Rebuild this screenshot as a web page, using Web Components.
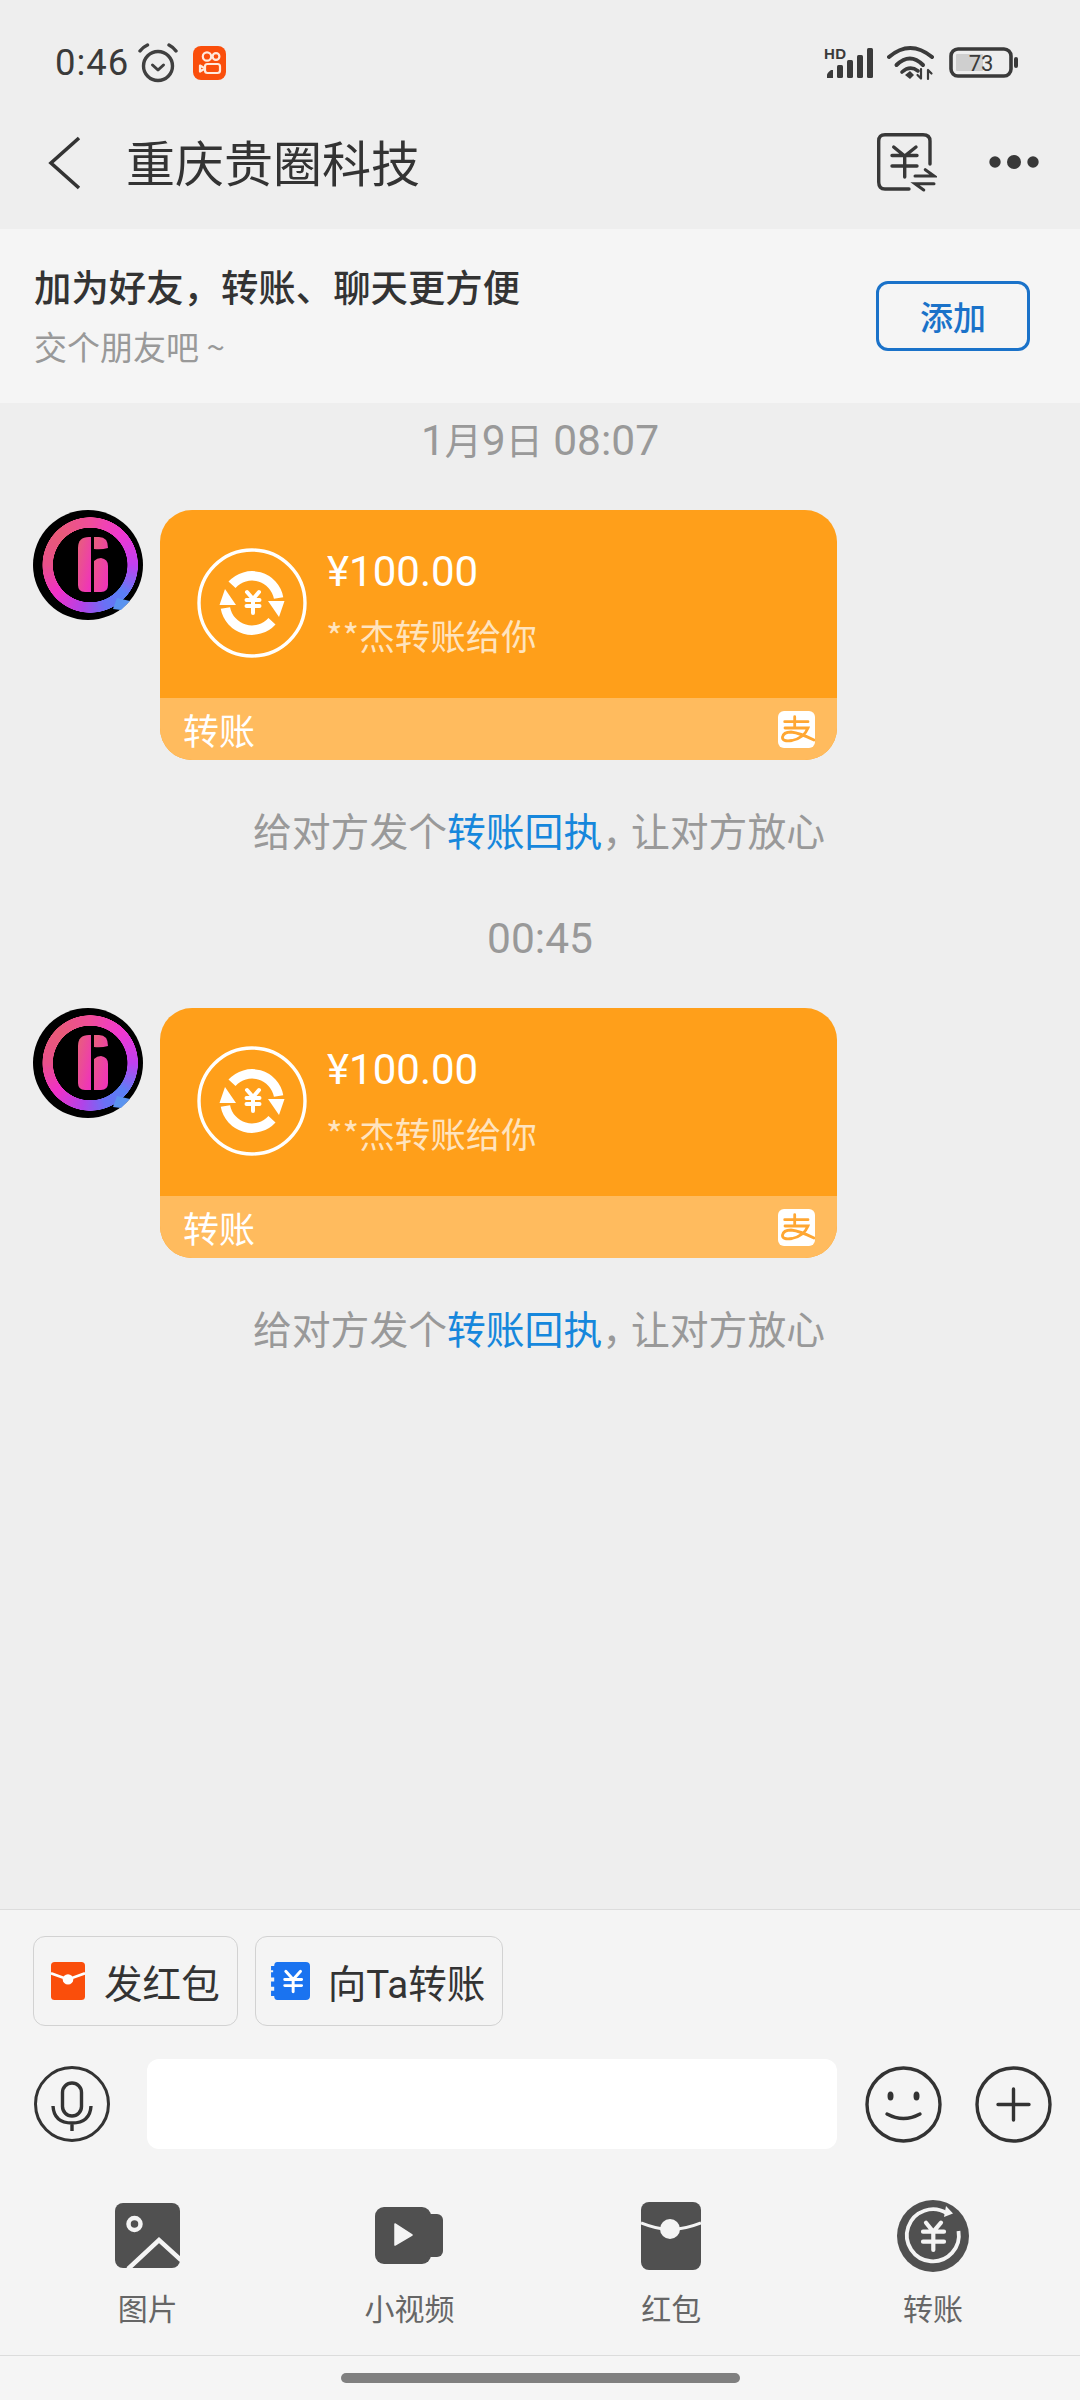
<!DOCTYPE html>
<html lang="zh">
<head>
<meta charset="utf-8">
<title>重庆贵圈科技</title>
<style>
  html, body { margin: 0; padding: 0; }
  body {
    width: 1080px;
    height: 2400px;
    overflow: hidden;
    background: #eeeeee;
    font-family: "Noto Sans CJK SC", "Noto Sans", sans-serif;
  }
  chat-page { height: 2400px; }
</style>
</head>
<body>
<chat-page>
  <status-bar slot="top"></status-bar>
  <chat-header slot="top" title="重庆贵圈科技"></chat-header>
  <friend-banner slot="top"></friend-banner>

  <time-stamp style="margin-top:14px">1<small>月</small>9<small>日</small> 08:07</time-stamp>
  <transfer-message style="margin-top:43px" amount="¥100.00" sender="**杰转账给你"></transfer-message>
  <receipt-note style="margin-top:42px"></receipt-note>
  <time-stamp style="margin-top:59px">00:45</time-stamp>
  <transfer-message style="margin-top:45px" amount="¥100.00" sender="**杰转账给你"></transfer-message>
  <receipt-note style="margin-top:42px"></receipt-note>

  <chat-toolbar slot="bottom"></chat-toolbar>
  <home-bar slot="bottom"></home-bar>
</chat-page>

<script>
class ChatPage extends HTMLElement {
  constructor() {
    super();
    this.attachShadow({mode: 'open'}).innerHTML = `
      <style>
        :host { display: flex; flex-direction: column; }
        main { flex: 1; min-height: 0; display: flex; flex-direction: column; }
      </style>
      <slot name="top"></slot>
      <main><slot></slot></main>
      <slot name="bottom"></slot>
    `;
  }
}

class StatusBar extends HTMLElement {
  constructor() {
    super();
    this.attachShadow({mode: 'open'}).innerHTML = `
      <style>
        :host {
          display: flex;
          align-items: center;
          height: 96px;
          padding: 30px 62px 0 55px;
          box-sizing: border-box;
          color: #3a3a3a;
        }
        .time { font: 400 36.500px/1 Roboto, sans-serif; letter-spacing: 1px; width: 82px; }
        .right { margin-left: auto; display: flex; align-items: center; }
        svg { display: block; }
      </style>
      <span class="time">0:46</span>
      <svg width="42" height="40" viewBox="0 0 42 40" fill="none" stroke="#404040">
        <circle cx="21" cy="23" r="14.5" stroke-width="3.4"/>
        <path d="M15.5 22 L21 27 L26.5 22" stroke-width="3" stroke-linecap="round" stroke-linejoin="round"/>
        <path d="M3 8 Q6 4 10.5 2 M32 2 Q36 4 39 8" stroke-width="3.4" stroke-linecap="round"/>
      </svg>
      <svg style="margin-left:14px" width="34" height="34" viewBox="0 0 34 34" fill="none">
        <rect width="33" height="34" rx="8" fill="#fa4e0b"/>
        <g stroke="#ffe9dc" stroke-width="2.2">
          <circle cx="14" cy="10.5" r="4.2"/>
          <circle cx="23" cy="10.5" r="3.4"/>
          <rect x="12" y="18" width="15" height="9" rx="2.5"/>
          <path d="M7 19.5 L12 22.5 L7 25.5 Z" stroke-linejoin="round"/>
        </g>
      </svg>
      <div class="right">
        <svg style="margin-top:-5px" width="50" height="37" viewBox="0 -5 50 37">
          <text x="0" y="12" font-family="Liberation Sans, sans-serif" font-size="15" font-weight="700" fill="#3a3a3a" letter-spacing="0.5">HD</text>
          <g fill="#3a3a3a">
            <path d="M3 31 V28 Q3 26 7 23 H9 V31 Z"/>
            <rect x="13" y="18" width="6" height="13" rx="1.5"/>
            <rect x="23" y="13" width="6" height="18" rx="1.5"/>
            <rect x="33" y="8" width="6" height="23" rx="1.5"/>
            <rect x="43" y="1" width="6" height="30" rx="1.5"/>
          </g>
        </svg>
        <svg style="margin-left:13px" width="48" height="36" viewBox="0 0 48 36" fill="none" stroke="#3a3a3a" stroke-width="4" stroke-linecap="round">
          <path d="M2 12 Q23 -6 45 12"/>
          <path d="M9.5 20 Q23 7 36 20"/>
          <path d="M15 27 Q23 20 31 26" stroke-width="3.6"/>
          <path d="M18 30 L23 26 L27 30 L23 34 Z" fill="#3a3a3a" stroke="none"/>
          <path d="M34 24 V33 M30.5 30 L34 33.5 M41 34 V25 M41 25 L44.5 28.5" stroke-width="2.2"/>
        </svg>
        <svg style="margin-left:14px" width="69" height="32" viewBox="0 0 69 32">
          <rect x="2" y="2" width="60" height="27" rx="7" fill="none" stroke="#3a3a3a" stroke-width="3.6"/>
          <rect x="7" y="7" width="27" height="17" rx="1" fill="#cfcfcf"/>
          <rect x="65" y="10" width="4" height="11" rx="2" fill="#3a3a3a"/>
          <text x="32" y="23.5" text-anchor="middle" font-family="Roboto, sans-serif" font-size="22" fill="#3a3a3a">73</text>
        </svg>
      </div>
    `;
  }
}

class ChatHeader extends HTMLElement {
  constructor() {
    super();
    const title = this.getAttribute('title');
    this.removeAttribute('title');
    this.attachShadow({mode: 'open'}).innerHTML = `
      <style>
        :host {
          display: flex;
          align-items: center;
          height: 133px;
          padding: 0 41px 0 48px;
          box-sizing: border-box;
        }
        h1 { margin: 0 0 5px 44px; font-size: 49px; font-weight: 400; color: #333; white-space: nowrap; line-height: 1; }
        .actions { margin-left: auto; display: flex; align-items: center; gap: 52px; }
        svg { display: block; }
        .dots { margin-bottom: 2px; }
      </style>
      <svg width="34" height="54" viewBox="0 0 34 54" fill="none" stroke="#333" stroke-width="3.6">
        <path d="M31 2 L3 27 L31 52"/>
      </svg>
      <h1>${title}</h1>
      <div class="actions">
        <svg width="60" height="60" viewBox="0 0 60 60" fill="none" stroke="#383838" stroke-width="3.4" stroke-linecap="round">
          <path d="M32 56 H8 Q1.700 56 1.700 49 V8 Q1.700 1.700 8 1.700 H46 Q53 1.700 53 8 V31"/>
          <path d="M16.700 14 L27.700 23 L39 14 M15 22.500 H40 M15 33 H40 M27.700 23 V44"/>
          <path d="M38 43 H57 L48.300 36.700 M57 50.700 H38 L46.700 57" stroke-width="3"/>
        </svg>
        <svg class="dots" width="50" height="20" viewBox="0 0 50 20" fill="#383838">
          <circle cx="6" cy="10" r="5.700"/><circle cx="25" cy="10" r="7"/><circle cx="44" cy="10" r="5.700"/>
        </svg>
      </div>
    `;
  }
}

class FriendBanner extends HTMLElement {
  constructor() {
    super();
    this.attachShadow({mode: 'open'}).innerHTML = `
      <style>
        :host {
          display: flex;
          align-items: center;
          height: 174px;
          padding: 0 50px 0 34px;
          box-sizing: border-box;
          background: #f5f5f5;
        }
        .info { flex: 1; }
        .title { font-size: 37.400px; font-weight: 500; color: #333; line-height: 50px; margin-top: -4px; }
        .sub { margin-top: 14px; font-size: 33px; color: #999; line-height: 42px; }
        .add {
          width: 154px;
          height: 70px;
          box-sizing: border-box;
          border: 3px solid #1a72c9;
          border-radius: 12px;
          display: flex;
          align-items: center;
          justify-content: center;
          font-size: 33px;
          font-weight: 500;
          color: #1a72c9;
        }
      </style>
      <div class="info">
        <div class="title">加为好友，转账、聊天更方便</div>
        <div class="sub">交个朋友吧 ~</div>
      </div>
      <div class="add">添加</div>
    `;
  }
}

class TimeStamp extends HTMLElement {
  constructor() {
    super();
    this.attachShadow({mode: 'open'}).innerHTML = `
      <style>
        :host {
          display: block;
          text-align: center;
          font-size: 42.500px;
          line-height: 48px;
          color: #999;
          font-family: Roboto, "Noto Sans CJK SC", sans-serif;
        }
        ::slotted(small) { font-size: 37px; }
      </style>
      <slot></slot>
    `;
  }
}

class TransferMessage extends HTMLElement {
  constructor() {
    super();
    const amount = this.getAttribute('amount');
    const sender = this.getAttribute('sender');
    this.attachShadow({mode: 'open'}).innerHTML = `
      <style>
        :host { display: flex; gap: 17px; padding-left: 33px; align-items: flex-start; }
        .avatar {
          width: 110px;
          height: 110px;
          flex: none;
          border-radius: 50%;
          background:
            radial-gradient(circle at 52% 50%, #000 37px, transparent 37.500px, transparent 47.500px, #000 48px),
            conic-gradient(from 0deg at 52% 50%, #f04d9a, #f038d0 45deg, #c040f0 90deg, #5a80f5 130deg, #6a70f5 160deg, #b044e8 190deg, #f030c8 230deg, #e8508a 270deg, #e85a78 315deg, #f04d9a);
        }
        .avatar svg { display: block; }
        .card {
          width: 677px;
          height: 250px;
          border-radius: 32px;
          overflow: hidden;
          display: flex;
          flex-direction: column;
          color: #fff;
          background: #ff9f1a;
        }
        .body { flex: 1; display: flex; align-items: center; padding: 0 0 0 37px; gap: 20px; }
        .coin { width: 110px; height: 110px; flex: none; display: block; margin-top: -3px; }
        .amount { font: 400 42px/48px Roboto, "Noto Sans CJK SC", sans-serif; }
        .sender { margin-top: 16px; margin-left: -1px; font-size: 35.500px; line-height: 46px; color: rgba(255,255,255,.72); }
        .info { margin-top: -2px; }
        .foot {
          height: 62px;
          background: #ffbb5e;
          display: flex;
          align-items: center;
          justify-content: space-between;
          padding: 0 22px 0 23px;
          font-size: 36px;
        }
        .ali { width: 37px; height: 37px; display: block; }
      </style>
      <div class="avatar">
        <svg width="110" height="110" viewBox="0 0 110 110">
          <defs>
            <linearGradient id="b" x1="0" y1="0" x2="1" y2="1">
              <stop offset="0" stop-color="#e8607a"/>
              <stop offset="1" stop-color="#f02fc0"/>
            </linearGradient>
          </defs>
          <path fill="url(#b)" d="M45 38 Q45 27 56 27 H58 V82 H52 Q45 82 45 75 Z"/>
          <path fill="url(#b)" d="M61 27 H66 Q75 27 75 38 Q68 40 61 39 Z M61 51 Q64 48 68 48 Q75 49 75 56 V75 Q75 82 68 82 H61 Z"/>
          <path fill="#5a93ef" d="M80 99 L84 88 L97 91 L88 100 Z"/>
        </svg>
      </div>
      <div class="card">
        <div class="body">
          <svg class="coin" viewBox="0 0 110 110" fill="none" stroke="#fff">
            <circle cx="55" cy="55" r="53" stroke-width="3.400"/>
            <path d="M35 36.800 A27 27 0 0 1 81.600 50" stroke-width="9.500"/>
            <path d="M75 73.200 A27 27 0 0 1 28.400 60" stroke-width="9.500"/>
            <path d="M71 53 L87.500 53 L82 69 Z M39 57 L22.500 57 L28 41 Z" fill="#fff" stroke="none"/>
            <path d="M50 44 L56 51 L62 44 M49.500 52 H62.500 M49.500 58 H62.500 M56 51 V65" stroke-width="4" stroke-linecap="round"/>
          </svg>
          <div class="info">
            <div class="amount">${amount}</div>
            <div class="sender">${sender}</div>
          </div>
        </div>
        <div class="foot">
          <span>转账</span>
          <svg class="ali" viewBox="0 0 37 37">
            <rect width="37" height="37" rx="6" fill="#fff"/>
            <path fill="none" stroke="#ffa733" stroke-width="2.800" stroke-linecap="round" d="M16.700 5.700 V15.700 M6.700 10.700 H30 M7 17 H30 Q26 27 14 29.500 Q4 31 4.500 26 Q5.500 21 13 21 Q22 22 36 29"/>
          </svg>
        </div>
      </div>
    `;
  }
}

class ReceiptNote extends HTMLElement {
  constructor() {
    super();
    this.attachShadow({mode: 'open'}).innerHTML = `
      <style>
        :host {
          display: block;
          padding-left: 253px;
          font-size: 38.800px;
          line-height: 54px;
          color: #999;
          white-space: nowrap;
        }
        b { font-weight: 400; color: #1687dc; }
        i { font-style: normal; margin-right: -10px; }
      </style>
      给对方发个<b>转账回执</b><i>，</i>让对方放心
    `;
  }
}

class QuickChip extends HTMLElement {
  constructor() {
    super();
    this.attachShadow({mode: 'open'}).innerHTML = `
      <style>
        :host {
          display: inline-flex;
          align-items: center;
          flex: none;
          height: 90px;
          box-sizing: border-box;
          border: 1.500px solid #d2d2d2;
          border-radius: 12px;
          padding: 0 17px;
          gap: 19px;
          font-size: 38.600px;
          color: #333;
          white-space: nowrap;
          font-family: Roboto, "Noto Sans CJK SC", sans-serif;
        }
        ::slotted(svg) { display: block; }
      </style>
      <slot name="icon"></slot><slot></slot>
    `;
  }
}

class ToolItem extends HTMLElement {
  constructor() {
    super();
    this.attachShadow({mode: 'open'}).innerHTML = `
      <style>
        :host {
          display: flex;
          flex-direction: column;
          align-items: center;
          font-size: 30px;
          line-height: 40px;
          color: #666;
        }
        .icon { height: 72px; display: flex; align-items: center; margin-bottom: 15px; }
        ::slotted(svg) { display: block; }
      </style>
      <div class="icon"><slot name="icon"></slot></div>
      <slot></slot>
    `;
  }
}

class ChatToolbar extends HTMLElement {
  constructor() {
    super();
    this.attachShadow({mode: 'open'}).innerHTML = `
      <style>
        :host {
          display: block;
          height: 446px;
          box-sizing: border-box;
          background: #f4f4f4;
          border-top: 1.500px solid #dcdcdc;
        }
        .chips { display: flex; gap: 17px; padding: 26px 0 0 33px; }
        .input-row { display: flex; align-items: center; margin-top: 33px; padding-left: 34px; }
        .field { width: 690px; height: 90px; margin: 0 28px 0 37px; border-radius: 12px; background: #fff; }
        .input-row svg { display: block; flex: none; }
        .plus { margin-left: 33px; }
        .tools { display: grid; grid-template-columns: repeat(4, 261.700px); padding: 51px 0 0 17px; }
      </style>
      <div class="chips">
        <quick-chip>
          <svg slot="icon" width="34" height="38" viewBox="0 0 32 37" preserveAspectRatio="none">
            <rect width="32" height="37" rx="3.500" fill="#fa4e0b"/>
            <path d="M0 11 L16 17 L32 11" fill="none" stroke="#fff" stroke-width="2.500"/>
            <circle cx="16" cy="17" r="5" fill="#fff"/>
          </svg>
          发红包
        </quick-chip>
        <quick-chip style="padding:0 17px 0 14px;gap:18px">
          <svg slot="icon" width="40" height="38" viewBox="0 0 38 37" preserveAspectRatio="none">
            <path fill="#1a73f0" d="M7 0 H34 Q38 0 38 4 V33 Q38 37 34 37 H7 Q4 37 4 33 H1 V28 H4 V24 H1 V19 H4 V15 H1 V10 H3 V8 H1 V4 H4 Q4 0 7 0 Z"/>
            <path fill="none" stroke="#fff" stroke-width="2.800" stroke-linecap="round" d="M15 9 L22 17 L29 9 M14 17 H30 M14 23 H30 M22 17 V29"/>
          </svg>
          向Ta转账
        </quick-chip>
      </div>
      <div class="input-row">
        <svg width="76" height="76" viewBox="0 0 76 76" fill="none" stroke="#333" stroke-width="3">
          <circle cx="38" cy="38" r="36.500"/>
          <rect x="28.500" y="17" width="19" height="33" rx="9.500" stroke-width="3.400"/>
          <path d="M19 40 Q20 57 38 57 Q56 57 57 40 M38 57 V65" stroke-width="3.400"/>
        </svg>
        <div class="field"></div>
        <svg width="77" height="77" viewBox="0 0 77 77" fill="none" stroke="#333" stroke-width="3.400">
          <circle cx="38.500" cy="38.500" r="36.500"/>
          <ellipse cx="25.500" cy="30" rx="3" ry="4.500" fill="#333" stroke="none"/>
          <ellipse cx="51.500" cy="30" rx="3" ry="4.500" fill="#333" stroke="none"/>
          <path d="M22 48 Q38.500 57 55 48" stroke-linecap="round"/>
        </svg>
        <svg class="plus" width="77" height="77" viewBox="0 0 77 77" fill="none" stroke="#333" stroke-width="3.400">
          <circle cx="38.500" cy="38.500" r="36.500"/>
          <path d="M23 38.500 H54 M38.500 23 V54" stroke-linecap="round"/>
        </svg>
      </div>
      <div class="tools">
        <tool-item>
          <svg slot="icon" width="66" height="66" viewBox="0 0 66 66">
            <rect width="65" height="65" rx="8" fill="#505050"/>
            <circle cx="19.500" cy="21" r="6" fill="none" stroke="#f4f4f4" stroke-width="4.500"/>
            <path d="M13 66 L44 37 L66 57" fill="none" stroke="#f4f4f4" stroke-width="4.500"/>
          </svg>
          图片
        </tool-item>
        <tool-item>
          <svg slot="icon" width="70" height="58" viewBox="0 0 70 58">
            <rect width="56" height="57" rx="9" fill="#505050"/>
            <rect x="50" y="7" width="18" height="43" rx="6" fill="#505050"/>
            <path d="M20 17 L37 28 L20 38 Z" fill="#f4f4f4" stroke="#f4f4f4" stroke-width="1.500" stroke-linejoin="round"/>
          </svg>
          小视频
        </tool-item>
        <tool-item>
          <svg slot="icon" width="60" height="68" viewBox="0 0 60 68">
            <rect width="60" height="68" rx="8" fill="#505050"/>
            <path d="M0 21 Q15 27 29 28 Q45 27 60 21" fill="none" stroke="#f4f4f4" stroke-width="3"/>
            <circle cx="29" cy="27" r="10" fill="#f4f4f4"/>
          </svg>
          红包
        </tool-item>
        <tool-item>
          <svg slot="icon" width="72" height="72" viewBox="0 0 72 72">
            <circle cx="36" cy="36" r="36" fill="#505050"/>
            <path d="M50 13.500 A26 26 0 1 0 61.500 31" fill="none" stroke="#f4f4f4" stroke-width="3.800"/>
            <path d="M49 6 L56 13.500 L47 17 Z" fill="#f4f4f4"/>
            <path d="M29 22.700 L36.300 31.700 L44 22.700 M26 31.700 H47 M26 41.700 H47 M36.300 31.700 V50" fill="none" stroke="#f4f4f4" stroke-width="4.200" stroke-linecap="round"/>
          </svg>
          转账
        </tool-item>
      </div>
    `;
  }
}

class HomeBar extends HTMLElement {
  constructor() {
    super();
    this.attachShadow({mode: 'open'}).innerHTML = `
      <style>
        :host {
          display: flex;
          align-items: center;
          justify-content: center;
          height: 45px;
          background: #f5f5f5;
          border-top: 1.500px solid #dcdcdc;
          box-sizing: border-box;
        }
        i { display: block; width: 399px; height: 10px; border-radius: 5px; background: #808080; }
      </style>
      <i></i>
    `;
  }
}

customElements.define('chat-page', ChatPage);
customElements.define('status-bar', StatusBar);
customElements.define('chat-header', ChatHeader);
customElements.define('friend-banner', FriendBanner);
customElements.define('time-stamp', TimeStamp);
customElements.define('transfer-message', TransferMessage);
customElements.define('receipt-note', ReceiptNote);
customElements.define('quick-chip', QuickChip);
customElements.define('tool-item', ToolItem);
customElements.define('chat-toolbar', ChatToolbar);
customElements.define('home-bar', HomeBar);
</script>
</body>
</html>
